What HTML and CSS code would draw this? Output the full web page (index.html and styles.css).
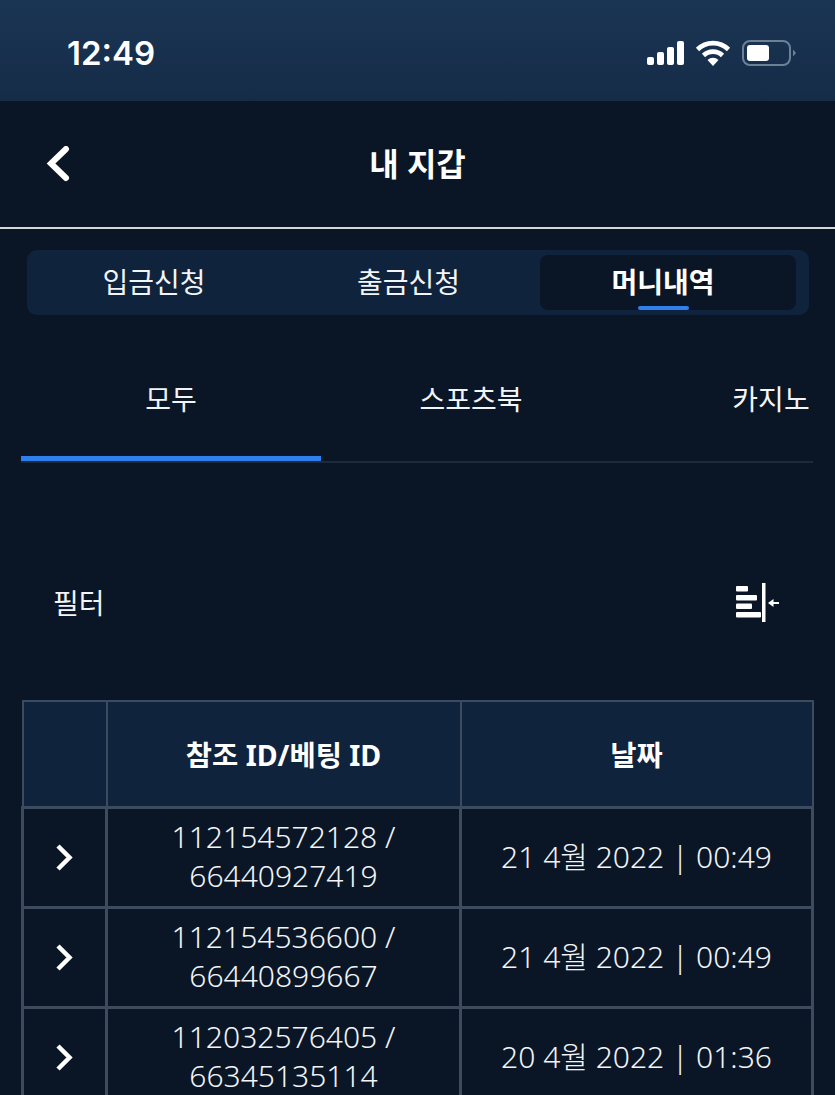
FILE: index.html
```html
<!DOCTYPE html>
<html lang="ko">
<head>
  <meta charset="UTF-8" />
  <title>내 지갑</title>
  <link rel="stylesheet" href="styles.css">
</head>
<body>
  <div class="status-bar">
    <span class="clock">12:49</span>
    <div class="status-icons">
      <svg class="signal" width="38" height="24" viewBox="0 0 38 24"><g fill="#fff"><rect x="0" y="16" width="7" height="8" rx="2"/><rect x="10" y="11" width="7" height="13" rx="2"/><rect x="20" y="6" width="7" height="18" rx="2"/><rect x="30" y="0" width="7" height="24" rx="2"/></g></svg>
      <svg width="36" height="26" viewBox="0 0 36 26"><g fill="none" stroke="#fff" stroke-width="4.6"><path d="M2.5 9.5a22 22 0 0 1 31 0"/><path d="M8.5 15.5a13.5 13.5 0 0 1 19 0"/></g><path d="M12.5 20a8 8 0 0 1 11 0L18 26z" fill="#fff"/></svg>
      <svg width="54" height="26" viewBox="0 0 54 26"><rect x="1" y="1" width="47" height="24" rx="7" fill="none" stroke="#6d8196" stroke-width="2"/><rect x="5" y="5" width="22" height="16" rx="3" fill="#fff"/><path d="M51 9.500l3 3.500-3 3.500z" fill="#6d8196"/></svg>
    </div>
  </div>

  <header class="top-bar">
    <svg class="back" width="26" height="36" viewBox="0 0 26 36"><path d="M20 3L5 17.500l15 14.500" fill="none" stroke="#fff" stroke-width="6" stroke-linecap="round" stroke-linejoin="miter"/></svg>
    <h1>내 지갑</h1>
  </header>

  <nav class="segment">
    <a>입금신청</a>
    <a>출금신청</a>
    <a class="active">머니내역</a>
  </nav>

  <div class="tabs">
    <a class="active">모두</a>
    <a>스포츠북</a>
    <a>카지노</a>
  </div>

  <div class="filter-row">
    <span>필터</span>
    <svg width="46" height="40" viewBox="0 0 46 40"><g fill="#fff"><rect x="1" y="3" width="12" height="5.500" rx="1"/><rect x="1" y="12" width="21" height="5.500" rx="1"/><rect x="1" y="20.500" width="16" height="5.500" rx="1"/><rect x="1" y="29" width="25" height="5.500" rx="1"/><rect x="27" y="0" width="3.500" height="39"/><rect x="37" y="19" width="7" height="2"/><path d="M33 20l5.500-4v8z"/></g></svg>
  </div>

  <table class="money-table">
    <colgroup><col class="col-arrow"><col class="col-id"><col class="col-date"></colgroup>
    <thead>
      <tr><th></th><th>참조 ID/베팅 ID</th><th>날짜</th></tr>
    </thead>
    <tbody>
      <tr>
        <td><svg width="20" height="28" viewBox="0 0 20 28"><path d="M3 2l11.500 11.500L3 25" fill="none" stroke="#fff" stroke-width="4.500"/></svg></td>
        <td>112154572128 / 66440927419</td>
        <td>21 4월 2022 | 00:49</td>
      </tr>
      <tr>
        <td><svg width="20" height="28" viewBox="0 0 20 28"><path d="M3 2l11.500 11.500L3 25" fill="none" stroke="#fff" stroke-width="4.500"/></svg></td>
        <td>112154536600 / 66440899667</td>
        <td>21 4월 2022 | 00:49</td>
      </tr>
      <tr>
        <td><svg width="20" height="28" viewBox="0 0 20 28"><path d="M3 2l11.500 11.500L3 25" fill="none" stroke="#fff" stroke-width="4.500"/></svg></td>
        <td>112032576405 / 66345135114</td>
        <td>20 4월 2022 | 01:36</td>
      </tr>
    </tbody>
  </table>
</body>
</html>
```

FILE: styles.css
```css
html, body {
  height: 1095px;
  overflow: hidden;
}

body {
  margin: 0;
  font-family: "Noto Sans", "Noto Sans CJK KR", sans-serif;
  background: #0a1626;
  color: #f2f4f6;
}

.status-bar {
  height: 101px;
  box-sizing: border-box;
  padding: 4px 39px 0 67px;
  display: flex;
  justify-content: space-between;
  align-items: center;
  background: linear-gradient(#1a3554, #152c47);
}

.clock {
  font-family: Inter, sans-serif;
  font-size: 33px;
  font-weight: 600;
  color: #fff;
}

.status-icons {
  display: flex;
  align-items: center;
  gap: 11px;
}

.signal {
  margin-right: -1px;
}

.top-bar {
  height: 128px;
  box-sizing: border-box;
  padding-bottom: 4px;
  border-bottom: 2px solid #d5d8d8;
  display: flex;
  align-items: center;
  justify-content: center;
  position: relative;
}

.top-bar h1 {
  margin: 0;
  font-size: 32px;
  font-weight: 700;
  color: #fff;
}

.back {
  position: absolute;
  left: 46px;
  top: 45px;
}

.segment {
  margin: 21px 26px 0 27px;
  height: 65px;
  box-sizing: border-box;
  padding: 5px 13px 5px 0;
  display: grid;
  grid-template-columns: 254px 259px 1fr;
  background: #10233d;
  border-radius: 10px;
}

.segment a {
  display: flex;
  align-items: center;
  justify-content: center;
  font-size: 28px;
  line-height: 1;
  padding-bottom: 2px;
  position: relative;
}

.segment a:nth-child(2) {
  padding-right: 4px;
}

.segment a.active {
  padding-right: 10px;
  background: #0a1626;
  border-radius: 8px;
  font-weight: 700;
  color: #fff;
}

.segment a.active::after {
  content: "";
  position: absolute;
  left: 98px;
  bottom: 0;
  width: 51px;
  height: 4px;
  border-radius: 2px;
  background: #2f80ed;
}

.tabs {
  margin: 22px 22px 0 21px;
  height: 126px;
  box-sizing: border-box;
  display: flex;
  overflow: hidden;
  border-bottom: 2px solid #1d2a3a;
}

.tabs a {
  flex: 0 0 300px;
  height: 126px;
  box-sizing: border-box;
  padding-top: 38px;
  text-align: center;
  font-size: 28px;
  line-height: 48px;
}

.tabs a.active {
  border-bottom: 7px solid #2f80ed;
}

.filter-row {
  height: 237px;
  box-sizing: border-box;
  padding: 40px 54px 0 53px;
  display: flex;
  align-items: center;
  justify-content: space-between;
  font-size: 28px;
}

.filter-row svg {
  margin-top: 3px;
}

.money-table {
  margin-left: 21px;
  width: 793px;
  table-layout: fixed;
  border-collapse: collapse;
  border: 2px solid #3c4b5e;
}

.col-arrow {
  width: 84px;
}

.col-id {
  width: 354px;
}

.money-table th,
.money-table td {
  border: 2px solid #3c4b5e;
  text-align: center;
  vertical-align: middle;
  padding: 0 40px;
}

.money-table th {
  height: 102px;
  padding-bottom: 2px;
  background: #10233d;
  font-size: 28.500px;
  font-weight: 700;
  color: #fff;
}

.money-table td {
  height: 94px;
  padding-bottom: 3px;
  border-width: 3px;
  font-size: 30px;
  font-weight: 300;
  line-height: 39px;
}

.money-table td:first-child,
.money-table th:first-child {
  padding: 0;
}

.money-table td:last-child {
  padding: 0 10px 3px;
}

.money-table svg {
  display: block;
  margin: 0 auto;
}
```
